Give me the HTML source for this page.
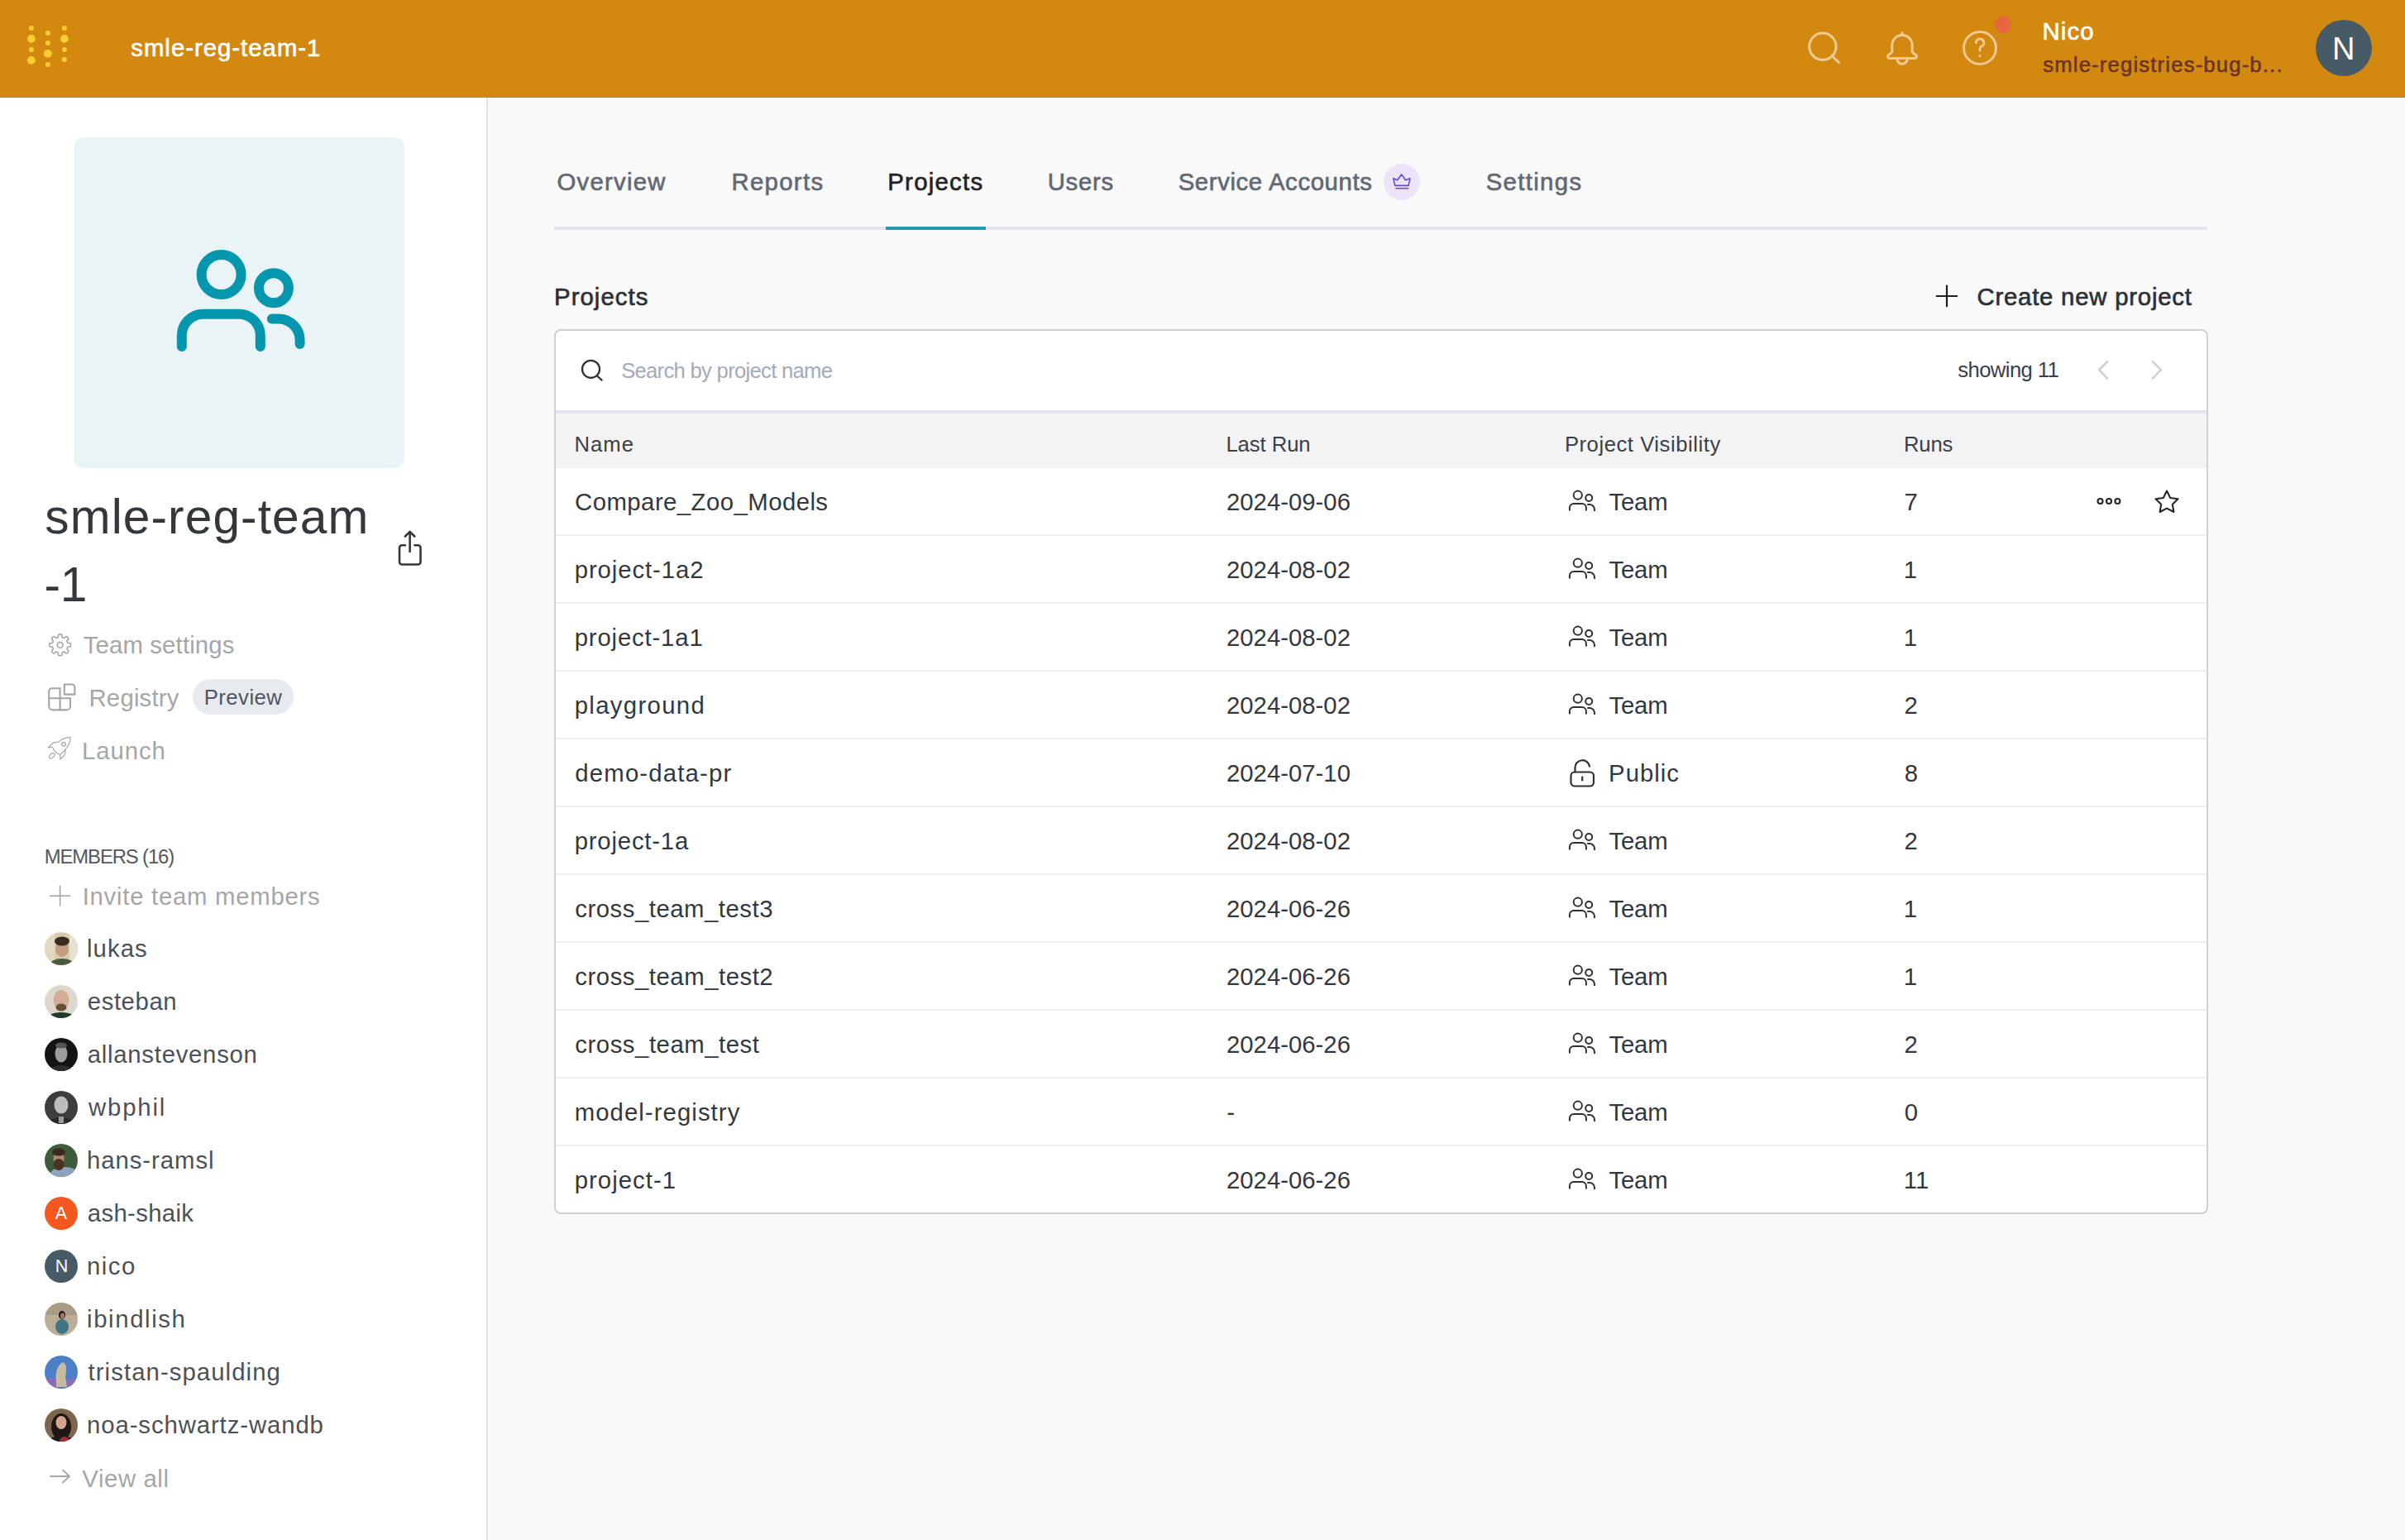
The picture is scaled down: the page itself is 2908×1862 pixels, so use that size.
<!DOCTYPE html>
<html><head><meta charset="utf-8"><title>smle-reg-team-1 Projects</title>
<style>
html,body{margin:0;padding:0;width:2908px;height:1862px;overflow:hidden;background:#f9f9f9;}
body{position:relative;font-family:"Liberation Sans",sans-serif;}
.t{position:absolute;white-space:nowrap;line-height:1;}
</style></head><body>
<div style="position:absolute;left:0px;top:0px;width:2908px;height:1862px;background:#f9f9f9;"></div>
<div style="position:absolute;left:0px;top:0px;width:588px;height:1862px;background:#ffffff;"></div>
<div style="position:absolute;left:588px;top:118px;width:2px;height:1744px;background:#e2e3e8;"></div>
<div style="position:absolute;left:0px;top:0px;width:2908px;height:118px;background:#d3880f;"></div>
<div style="position:absolute;left:0px;top:117px;width:2908px;height:1px;background:#cf7f06;"></div>
<svg style="position:absolute;left:0px;top:0px;" width="120" height="118" viewBox="0 0 120 118"><circle cx="37.9" cy="33.9" r="3" fill="#ffcc33"/><circle cx="37.9" cy="46.9" r="4.9" fill="#ffcc33"/><circle cx="37.9" cy="59.9" r="3" fill="#ffcc33"/><circle cx="37.9" cy="72.9" r="4.9" fill="#ffcc33"/><circle cx="57.9" cy="39.9" r="3" fill="#ffcc33"/><circle cx="57.9" cy="51.9" r="3" fill="#ffcc33"/><circle cx="57.9" cy="64.9" r="4.9" fill="#ffcc33"/><circle cx="57.9" cy="77.9" r="3" fill="#ffcc33"/><circle cx="77.9" cy="33.9" r="3" fill="#ffcc33"/><circle cx="77.9" cy="46.9" r="4.9" fill="#ffcc33"/><circle cx="77.9" cy="59.9" r="3" fill="#ffcc33"/><circle cx="77.9" cy="71.9" r="3" fill="#ffcc33"/></svg>
<div class="t" style="left:158.28px;top:43.44px;font-size:29.32px;letter-spacing:1.008px;color:#ffffff;-webkit-text-stroke:0.64px #ffffff;">smle-reg-team-1</div>
<svg style="position:absolute;left:2170px;top:20px;" width="270" height="80" viewBox="0 0 270 80"><g fill="none" stroke="#efca93" stroke-width="3" stroke-linecap="round" stroke-linejoin="round"><circle cx="33.9" cy="36.2" r="16.2"/><line x1="45.5" y1="48" x2="53.5" y2="55.5"/><path d="M117.8 43 V34.6 a12.2 12.2 0 0 1 24.4 0 V43 l4.3 3.6 a2.2 2.2 0 0 1 -1.4 4 H114.9 a2.2 2.2 0 0 1 -1.4 -4 z"/><path d="M123.6 50.8 a6.4 6.4 0 0 0 12.8 0"/><line x1="130" y1="19.5" x2="130" y2="21.5"/><circle cx="224" cy="38" r="19.5"/><path d="M219.3 31.8 a4.8 4.8 0 1 1 6.6 4.4 c-1.3 0.6 -1.9 1.5 -1.9 2.9 v2"/><line x1="224" y1="47.4" x2="224" y2="47.6"/></g><circle cx="252" cy="10.1" r="10.1" fill="#e8663f"/></svg>
<div class="t" style="left:2469.50px;top:22.94px;font-size:29.32px;letter-spacing:1.163px;color:#ffffff;-webkit-text-stroke:0.64px #ffffff;">Nico</div>
<div class="t" style="left:2470.29px;top:65.97px;font-size:25.65px;letter-spacing:1.177px;color:#6c3426;-webkit-text-stroke:0.56px #6c3426;">smle-registries-bug-b...</div>
<svg style="position:absolute;left:2800px;top:24px;" width="68" height="68" viewBox="0 0 68 68"><circle cx="34" cy="34" r="34" fill="#475b66"/></svg>
<div class="t" style="left:2819.88px;top:40.10px;font-size:38.00px;letter-spacing:0.000px;color:#ffffff;">N</div>
<div style="position:absolute;left:89px;top:166px;width:400px;height:400px;background:#eaf3f6;border-radius:12px;"></div>
<svg style="position:absolute;left:89px;top:166px;" width="400" height="400" viewBox="0 0 400 400"><g fill="none" stroke="#0597ad" stroke-width="12" stroke-linecap="round" stroke-linejoin="round"><circle cx="178.6" cy="166" r="24"/><circle cx="241.9" cy="182.2" r="18"/><path d="M130.8 253 V239.7 a26 26 0 0 1 26 -26 H199.8 a26 26 0 0 1 26 26 V253"/><path d="M239.8 219.4 H247.6 a26 26 0 0 1 26 26 V250"/></g></svg>
<div class="t" style="left:54.37px;top:596.18px;font-size:58.63px;letter-spacing:1.089px;color:#33383d;">smle-reg-team</div>
<div class="t" style="left:53.39px;top:678.48px;font-size:58.63px;letter-spacing:-0.066px;color:#33383d;">-1</div>
<svg style="position:absolute;left:470px;top:630px;" width="50" height="60" viewBox="0 0 50 60"><g fill="none" stroke="#34383c" stroke-width="2.6" stroke-linecap="round" stroke-linejoin="round"><path d="M25.6 37 V13"/><path d="M19.9 18.5 L25.6 12.8 L31.3 18.5"/><path d="M20 29.2 H16 a3 3 0 0 0 -3 3 V49.5 a3 3 0 0 0 3 3 H35.5 a3 3 0 0 0 3 -3 V32.2 a3 3 0 0 0 -3 -3 H31.4"/></g></svg>
<svg style="position:absolute;left:50px;top:755px;" width="50" height="175" viewBox="0 0 50 175"><g fill="none" stroke="#a6a6a6" stroke-width="1.6" stroke-linejoin="round" stroke-linecap="round"><path d="M22.67 11.90 L23.01 11.91 L23.34 11.92 L23.68 11.95 L24.01 12.01 L24.34 12.11 L24.64 12.37 L24.85 13.05 L24.93 14.19 L25.00 15.11 L25.15 15.54 L25.36 15.72 L25.58 15.83 L25.81 15.93 L26.04 16.02 L26.27 16.11 L26.50 16.20 L26.72 16.30 L26.95 16.40 L27.19 16.48 L27.46 16.50 L27.87 16.31 L28.58 15.70 L29.44 14.95 L30.06 14.62 L30.46 14.65 L30.77 14.80 L31.04 15.00 L31.30 15.22 L31.55 15.45 L31.79 15.68 L32.02 15.92 L32.25 16.17 L32.47 16.43 L32.67 16.70 L32.82 17.01 L32.85 17.41 L32.52 18.03 L31.77 18.89 L31.16 19.60 L30.97 20.01 L30.99 20.28 L31.07 20.52 L31.17 20.75 L31.27 20.97 L31.36 21.20 L31.45 21.43 L31.54 21.66 L31.64 21.89 L31.75 22.11 L31.93 22.32 L32.36 22.47 L33.28 22.54 L34.42 22.62 L35.10 22.83 L35.36 23.13 L35.46 23.46 L35.52 23.79 L35.55 24.13 L35.56 24.46 L35.57 24.80 L35.56 25.14 L35.55 25.47 L35.52 25.81 L35.46 26.14 L35.36 26.47 L35.10 26.77 L34.42 26.98 L33.28 27.06 L32.36 27.13 L31.93 27.28 L31.75 27.49 L31.64 27.71 L31.54 27.94 L31.45 28.17 L31.36 28.40 L31.27 28.63 L31.17 28.85 L31.07 29.08 L30.99 29.32 L30.97 29.59 L31.16 30.00 L31.77 30.71 L32.52 31.57 L32.85 32.19 L32.82 32.59 L32.67 32.90 L32.47 33.17 L32.25 33.43 L32.02 33.68 L31.79 33.92 L31.55 34.15 L31.30 34.38 L31.04 34.60 L30.77 34.80 L30.46 34.95 L30.06 34.98 L29.44 34.65 L28.58 33.90 L27.87 33.29 L27.46 33.10 L27.19 33.12 L26.95 33.20 L26.72 33.30 L26.50 33.40 L26.27 33.49 L26.04 33.58 L25.81 33.67 L25.58 33.77 L25.36 33.88 L25.15 34.06 L25.00 34.49 L24.93 35.41 L24.85 36.55 L24.64 37.23 L24.34 37.49 L24.01 37.59 L23.68 37.65 L23.34 37.68 L23.01 37.69 L22.67 37.70 L22.33 37.69 L22.00 37.68 L21.66 37.65 L21.33 37.59 L21.00 37.49 L20.70 37.23 L20.49 36.55 L20.41 35.41 L20.34 34.49 L20.19 34.06 L19.98 33.88 L19.76 33.77 L19.53 33.67 L19.30 33.58 L19.07 33.49 L18.84 33.40 L18.62 33.30 L18.39 33.20 L18.15 33.12 L17.88 33.10 L17.47 33.29 L16.76 33.90 L15.90 34.65 L15.28 34.98 L14.88 34.95 L14.57 34.80 L14.30 34.60 L14.04 34.38 L13.79 34.15 L13.55 33.92 L13.32 33.68 L13.09 33.43 L12.87 33.17 L12.67 32.90 L12.52 32.59 L12.49 32.19 L12.82 31.57 L13.57 30.71 L14.18 30.00 L14.37 29.59 L14.35 29.32 L14.27 29.08 L14.17 28.85 L14.07 28.63 L13.98 28.40 L13.89 28.17 L13.80 27.94 L13.70 27.71 L13.59 27.49 L13.41 27.28 L12.98 27.13 L12.06 27.06 L10.92 26.98 L10.24 26.77 L9.98 26.47 L9.88 26.14 L9.82 25.81 L9.79 25.47 L9.78 25.14 L9.77 24.80 L9.78 24.46 L9.79 24.13 L9.82 23.79 L9.88 23.46 L9.98 23.13 L10.24 22.83 L10.92 22.62 L12.06 22.54 L12.98 22.47 L13.41 22.32 L13.59 22.11 L13.70 21.89 L13.80 21.66 L13.89 21.43 L13.98 21.20 L14.07 20.97 L14.17 20.75 L14.27 20.52 L14.35 20.28 L14.37 20.01 L14.18 19.60 L13.57 18.89 L12.82 18.03 L12.49 17.41 L12.52 17.01 L12.67 16.70 L12.87 16.43 L13.09 16.17 L13.32 15.92 L13.55 15.68 L13.79 15.45 L14.04 15.22 L14.30 15.00 L14.57 14.80 L14.88 14.65 L15.28 14.62 L15.90 14.95 L16.76 15.70 L17.47 16.31 L17.88 16.50 L18.15 16.48 L18.39 16.40 L18.62 16.30 L18.84 16.20 L19.07 16.11 L19.30 16.02 L19.53 15.93 L19.76 15.83 L19.98 15.72 L20.19 15.54 L20.34 15.11 L20.41 14.19 L20.49 13.05 L20.70 12.37 L21.00 12.11 L21.33 12.01 L21.66 11.95 L22.00 11.92 L22.33 11.91Z"/><circle cx="22.67" cy="24.8" r="3.4"/></g><g fill="none" stroke="#a6a6a6" stroke-width="2.1" stroke-linejoin="round" stroke-linecap="round"><path d="M22.6 77.2 H13 a3.8 3.8 0 0 0 -3.8 3.8 V98.8 a4.6 4.6 0 0 0 4.6 4.6 H30.6 a4.4 4.4 0 0 0 4.4 -4.4 V89.3 H9.5 M22.6 77.2 V103.4"/><path d="M27.8 72.5 H36.8 a3.6 3.6 0 0 1 3.6 3.6 V84.6 H27.8 Z"/></g><g fill="none" stroke="#a6a6a6" stroke-width="1.2" stroke-linejoin="round" stroke-linecap="round"><path d="M21.3 141.8 C24.5 138.5 29 136.5 35.3 136.4 C35.3 143 33 149 22.7 157.4 C18 155.5 15.2 152.5 14.1 149.7"/><path d="M20.1 142.2 L14.1 143.2 L8.4 148.8 L13.4 148.4"/><path d="M22.7 157.4 L22.9 163 L28.5 157.4 L29.2 151.6"/><circle cx="27" cy="144.7" r="2.4"/><ellipse cx="12.9" cy="158.8" rx="3.9" ry="2.3" transform="rotate(-45 12.9 158.8)"/></g></svg>
<div class="t" style="left:100.64px;top:765.14px;font-size:29.32px;letter-spacing:0.167px;color:#a6a6a6;">Team settings</div>
<div class="t" style="left:107.50px;top:829.44px;font-size:29.32px;letter-spacing:0.206px;color:#a6a6a6;">Registry</div>
<div style="position:absolute;left:233px;top:821px;width:122px;height:43px;background:#e7eaee;border-radius:22px;"></div>
<div class="t" style="left:246.70px;top:831.47px;font-size:25.65px;letter-spacing:0.501px;color:#4e5563;">Preview</div>
<div class="t" style="left:98.90px;top:893.14px;font-size:29.32px;letter-spacing:0.966px;color:#a6a6a6;">Launch</div>
<div class="t" style="left:53.85px;top:1023.89px;font-size:23.82px;letter-spacing:-1.098px;color:#53585e;">MEMBERS (16)</div>
<svg style="position:absolute;left:55px;top:1065px;" width="35" height="35" viewBox="0 0 35 35"><g stroke="#a6a6a6" stroke-width="1.6" stroke-linecap="butt"><line x1="5" y1="18.2" x2="30.1" y2="18.2"/><line x1="17.6" y1="5.6" x2="17.6" y2="30.6"/></g></svg>
<div class="t" style="left:99.69px;top:1069.14px;font-size:29.32px;letter-spacing:0.742px;color:#a6a6a6;">Invite team members</div>
<svg style="position:absolute;left:54px;top:1127px;" width="40" height="40" viewBox="0 0 40 40"><defs><clipPath id="av0"><circle cx="20" cy="20" r="20"/></clipPath></defs><g clip-path="url(#av0)"><rect width="40" height="40" fill="#d6cbb0"/><rect x="0" y="0" width="12" height="40" fill="#e3d9c3"/><rect x="30" y="0" width="10" height="40" fill="#e8e0d0"/><ellipse cx="21" cy="20" rx="8" ry="10" fill="#c59c80"/><ellipse cx="21" cy="11" rx="9" ry="5.5" fill="#3a2b22"/><ellipse cx="21" cy="40" rx="15" ry="8" fill="#4a5a3a"/></g></svg>
<div class="t" style="left:105.02px;top:1132.14px;font-size:29.32px;letter-spacing:1.049px;color:#4c5157;">lukas</div>
<svg style="position:absolute;left:54px;top:1191px;" width="40" height="40" viewBox="0 0 40 40"><defs><clipPath id="av1"><circle cx="20" cy="20" r="20"/></clipPath></defs><g clip-path="url(#av1)"><rect width="40" height="40" fill="#dcd8ce"/><ellipse cx="20" cy="18" rx="9.5" ry="12" fill="#d3ae94"/><ellipse cx="20" cy="27" rx="6.5" ry="4.5" fill="#6e4c36"/><ellipse cx="20" cy="43" rx="20" ry="10" fill="#1f3d29"/></g></svg>
<div class="t" style="left:105.75px;top:1196.14px;font-size:29.32px;letter-spacing:0.587px;color:#4c5157;">esteban</div>
<svg style="position:absolute;left:54px;top:1255px;" width="40" height="40" viewBox="0 0 40 40"><defs><clipPath id="av2"><circle cx="20" cy="20" r="20"/></clipPath></defs><g clip-path="url(#av2)"><rect width="40" height="40" fill="#141414"/><ellipse cx="20" cy="19" rx="7.5" ry="10.5" fill="#9c9c9c"/><ellipse cx="20" cy="9" rx="7" ry="3.5" fill="#555"/><ellipse cx="20" cy="42" rx="16" ry="9" fill="#2c2c2c"/></g></svg>
<div class="t" style="left:105.75px;top:1260.14px;font-size:29.32px;letter-spacing:0.736px;color:#4c5157;">allanstevenson</div>
<svg style="position:absolute;left:54px;top:1319px;" width="40" height="40" viewBox="0 0 40 40"><defs><clipPath id="av3"><circle cx="20" cy="20" r="20"/></clipPath></defs><g clip-path="url(#av3)"><rect width="40" height="40" fill="#3d3d3d"/><ellipse cx="20" cy="17" rx="8.5" ry="10.5" fill="#bdbdbd"/><ellipse cx="20" cy="41" rx="17" ry="9" fill="#2b2b2b"/><rect x="17" y="31" width="6" height="8" fill="#9a9a9a"/></g></svg>
<div class="t" style="left:107.04px;top:1324.14px;font-size:29.32px;letter-spacing:1.842px;color:#4c5157;">wbphil</div>
<svg style="position:absolute;left:54px;top:1383px;" width="40" height="40" viewBox="0 0 40 40"><defs><clipPath id="av4"><circle cx="20" cy="20" r="20"/></clipPath></defs><g clip-path="url(#av4)"><rect width="40" height="40" fill="#3f5c3a"/><ellipse cx="24" cy="38" rx="18" ry="10" fill="#8ea3bf"/><ellipse cx="17" cy="18" rx="6.5" ry="8" fill="#b08a70"/><ellipse cx="17" cy="10" rx="8" ry="4.5" fill="#3a2a1e"/><ellipse cx="17" cy="25" rx="6.5" ry="7" fill="#4a3222"/></g></svg>
<div class="t" style="left:104.97px;top:1388.14px;font-size:29.32px;letter-spacing:0.956px;color:#4c5157;">hans-ramsl</div>
<svg style="position:absolute;left:54px;top:1447px;" width="40" height="40" viewBox="0 0 40 40"><defs><clipPath id="av5"><circle cx="20" cy="20" r="20"/></clipPath></defs><g clip-path="url(#av5)"><rect width="40" height="40" fill="#f4581f"/></g></svg>
<div class="t" style="left:105.75px;top:1452.14px;font-size:29.32px;letter-spacing:0.342px;color:#4c5157;">ash-shaik</div>
<svg style="position:absolute;left:54px;top:1511px;" width="40" height="40" viewBox="0 0 40 40"><defs><clipPath id="av6"><circle cx="20" cy="20" r="20"/></clipPath></defs><g clip-path="url(#av6)"><rect width="40" height="40" fill="#475b66"/></g></svg>
<div class="t" style="left:105.05px;top:1516.14px;font-size:29.32px;letter-spacing:1.466px;color:#4c5157;">nico</div>
<svg style="position:absolute;left:54px;top:1575px;" width="40" height="40" viewBox="0 0 40 40"><defs><clipPath id="av7"><circle cx="20" cy="20" r="20"/></clipPath></defs><g clip-path="url(#av7)"><rect width="40" height="40" fill="#bcae95"/><rect x="0" y="0" width="40" height="15" fill="#a99c86"/><ellipse cx="21" cy="29" rx="8" ry="9" fill="#3d7582"/><ellipse cx="21" cy="15" rx="4" ry="5" fill="#1e1a1a"/><ellipse cx="21.5" cy="16" rx="2.5" ry="3.5" fill="#a07a66"/></g></svg>
<div class="t" style="left:105.04px;top:1580.14px;font-size:29.32px;letter-spacing:1.617px;color:#4c5157;">ibindlish</div>
<svg style="position:absolute;left:54px;top:1639px;" width="40" height="40" viewBox="0 0 40 40"><defs><clipPath id="av8"><circle cx="20" cy="20" r="20"/></clipPath></defs><g clip-path="url(#av8)"><rect width="40" height="40" fill="#4b80c9"/><ellipse cx="8" cy="33" rx="9" ry="6" fill="#8c6cb8"/><ellipse cx="33" cy="34" rx="8" ry="6" fill="#8c6cb8"/><path d="M14 38 L14 30 C12 22 16 10 22 8 C27 10 27 18 25 26 L27 38 Z" fill="#c8b9a3"/></g></svg>
<div class="t" style="left:106.56px;top:1644.14px;font-size:29.32px;letter-spacing:1.077px;color:#4c5157;">tristan-spaulding</div>
<svg style="position:absolute;left:54px;top:1703px;" width="40" height="40" viewBox="0 0 40 40"><defs><clipPath id="av9"><circle cx="20" cy="20" r="20"/></clipPath></defs><g clip-path="url(#av9)"><rect width="40" height="40" fill="#7d6650"/><ellipse cx="20" cy="22" rx="12" ry="16" fill="#1e1612"/><ellipse cx="20" cy="17" rx="6.5" ry="8" fill="#d3a38b"/><ellipse cx="20" cy="42" rx="18" ry="9" fill="#1a1a1a"/><ellipse cx="24" cy="40" rx="6" ry="6" fill="#a83030"/></g></svg>
<div class="t" style="left:105.05px;top:1708.14px;font-size:29.32px;letter-spacing:0.905px;color:#4c5157;">noa-schwartz-wandb</div>
<div class="t" style="left:54px;top:1457.25px;width:40px;text-align:center;font-size:21.5px;color:#fff">A</div>
<div class="t" style="left:54.5px;top:1521.25px;width:40px;text-align:center;font-size:21.5px;color:#fff">N</div>
<svg style="position:absolute;left:55px;top:1770px;" width="35" height="30" viewBox="0 0 35 30"><g fill="none" stroke="#a6a6a6" stroke-width="1.8" stroke-linecap="round" stroke-linejoin="round"><path d="M6 15 H29 M21 7.5 L29 15 L21 22.5"/></g></svg>
<div class="t" style="left:99.37px;top:1773.14px;font-size:29.32px;letter-spacing:0.582px;color:#a6a6a6;">View all</div>
<div class="t" style="left:673.41px;top:205.14px;font-size:29.32px;letter-spacing:1.277px;color:#626873;-webkit-text-stroke:0.64px #626873;">Overview</div>
<div class="t" style="left:884.40px;top:205.14px;font-size:29.32px;letter-spacing:1.336px;color:#626873;-webkit-text-stroke:0.64px #626873;">Reports</div>
<div class="t" style="left:1073.30px;top:205.14px;font-size:29.32px;letter-spacing:1.266px;color:#1f2328;-webkit-text-stroke:0.64px #1f2328;">Projects</div>
<div class="t" style="left:1266.74px;top:205.14px;font-size:29.32px;letter-spacing:0.692px;color:#626873;-webkit-text-stroke:0.64px #626873;">Users</div>
<div class="t" style="left:1424.67px;top:205.14px;font-size:29.32px;letter-spacing:0.627px;color:#626873;-webkit-text-stroke:0.64px #626873;">Service Accounts</div>
<svg style="position:absolute;left:1673px;top:198px;" width="44" height="44" viewBox="0 0 44 44"><circle cx="22" cy="22" r="22" fill="#ebe4fc"/><g fill="none" stroke="#6b47d0" stroke-width="1.6" stroke-linejoin="round" stroke-linecap="round"><path d="M11.8 17.8 L16.6 19.7 L21.7 12.9 L26.5 19.7 L31.9 17.8 L30.1 26.4 H13.7 Z"/><line x1="14.9" y1="29.8" x2="29.7" y2="29.8"/></g></svg>
<div class="t" style="left:1796.67px;top:205.14px;font-size:29.32px;letter-spacing:1.352px;color:#626873;-webkit-text-stroke:0.64px #626873;">Settings</div>
<div style="position:absolute;left:670px;top:274px;width:1999px;height:4px;background:#e4e5ea;"></div>
<div style="position:absolute;left:1071px;top:274px;width:121px;height:4px;background:#1f9bb0;"></div>
<div class="t" style="left:670.10px;top:343.74px;font-size:29.32px;letter-spacing:1.052px;color:#2b3036;-webkit-text-stroke:0.64px #2b3036;">Projects</div>
<svg style="position:absolute;left:2330px;top:330px;" width="50" height="50" viewBox="0 0 50 50"><g stroke="#1c2028" stroke-width="2.2" stroke-linecap="round"><line x1="11.7" y1="28" x2="36.2" y2="28"/><line x1="24" y1="15.6" x2="24" y2="40.3"/></g></svg>
<div class="t" style="left:2390.51px;top:344.14px;font-size:29.32px;letter-spacing:0.785px;color:#2b3036;-webkit-text-stroke:0.64px #2b3036;">Create new project</div>
<div style="position:absolute;left:670px;top:398px;width:2000px;height:1070px;background:#ffffff;box-sizing:border-box;border:2px solid #d0d0d0;border-radius:8px;"></div>
<svg style="position:absolute;left:690px;top:425px;" width="50" height="45" viewBox="0 0 50 45"><g fill="none" stroke="#2d3136" stroke-width="2.2" stroke-linecap="round"><circle cx="24.5" cy="21.3" r="10.5"/><line x1="32" y1="29.5" x2="37.6" y2="34.6"/></g></svg>
<div class="t" style="left:751.14px;top:435.87px;font-size:25.65px;letter-spacing:-0.710px;color:#a2abb8;">Search by project name</div>
<div class="t" style="left:2367.29px;top:435.47px;font-size:25.65px;letter-spacing:-0.590px;color:#3b4046;">showing 11</div>
<svg style="position:absolute;left:2520px;top:420px;" width="110" height="60" viewBox="0 0 110 60"><g fill="none" stroke="#d0d0d0" stroke-width="2.6" stroke-linecap="round" stroke-linejoin="round"><path d="M28.1 17.2 L18.1 27.2 L28.1 37.5"/><path d="M82.8 17.2 L92.9 27.2 L82.8 37.5"/></g></svg>
<div style="position:absolute;left:672px;top:496px;width:1996px;height:4px;background:#e4e5ea;"></div>
<div style="position:absolute;left:672px;top:500px;width:1996px;height:66px;background:#f3f3f3;"></div>
<div class="t" style="left:694.50px;top:524.97px;font-size:25.65px;letter-spacing:1.006px;color:#3b4046;">Name</div>
<div class="t" style="left:1482.40px;top:524.97px;font-size:25.65px;letter-spacing:-0.057px;color:#3b4046;">Last Run</div>
<div class="t" style="left:1891.90px;top:524.97px;font-size:25.65px;letter-spacing:0.544px;color:#3b4046;">Project Visibility</div>
<div class="t" style="left:2301.90px;top:524.97px;font-size:25.65px;letter-spacing:-0.117px;color:#3b4046;">Runs</div>
<div class="t" style="left:695.11px;top:592.14px;font-size:29.32px;letter-spacing:0.456px;color:#33383d;">Compare_Zoo_Models</div>
<div class="t" style="left:1483.03px;top:592.14px;font-size:29.32px;letter-spacing:0.000px;color:#33383d;letter-spacing:0.000px">2024-09-06</div>
<svg style="position:absolute;left:1890px;top:586px;" width="45" height="35" viewBox="0 0 45 35"><g fill="none" stroke="#2d3136" stroke-width="2" stroke-linecap="round" stroke-linejoin="round"><circle cx="17.8" cy="12.7" r="5.1"/><circle cx="31.2" cy="16" r="4"/><path d="M7.9 30.8 V27.9 a5 5 0 0 1 5 -5 H22.9 a5 5 0 0 1 5 5 V30.8"/><path d="M30 24 H32 a6 6 0 0 1 6 6 V31.3"/></g></svg>
<div class="t" style="left:1945.44px;top:592.14px;font-size:29.32px;letter-spacing:-0.149px;color:#33383d;">Team</div>
<div class="t" style="left:2302.50px;top:592.14px;font-size:29.32px;letter-spacing:0.000px;color:#33383d;">7</div>
<div style="position:absolute;left:672px;top:646px;width:1996px;height:2px;background:#efefef;"></div>
<div class="t" style="left:694.71px;top:674.14px;font-size:29.32px;letter-spacing:0.910px;color:#33383d;">project-1a2</div>
<div class="t" style="left:1483.03px;top:674.14px;font-size:29.32px;letter-spacing:0.000px;color:#33383d;letter-spacing:0.000px">2024-08-02</div>
<svg style="position:absolute;left:1890px;top:668px;" width="45" height="35" viewBox="0 0 45 35"><g fill="none" stroke="#2d3136" stroke-width="2" stroke-linecap="round" stroke-linejoin="round"><circle cx="17.8" cy="12.7" r="5.1"/><circle cx="31.2" cy="16" r="4"/><path d="M7.9 30.8 V27.9 a5 5 0 0 1 5 -5 H22.9 a5 5 0 0 1 5 5 V30.8"/><path d="M30 24 H32 a6 6 0 0 1 6 6 V31.3"/></g></svg>
<div class="t" style="left:1945.44px;top:674.14px;font-size:29.32px;letter-spacing:-0.149px;color:#33383d;">Team</div>
<div class="t" style="left:2301.77px;top:674.14px;font-size:29.32px;letter-spacing:0.000px;color:#33383d;">1</div>
<div style="position:absolute;left:672px;top:728px;width:1996px;height:2px;background:#efefef;"></div>
<div class="t" style="left:694.71px;top:756.14px;font-size:29.32px;letter-spacing:0.835px;color:#33383d;">project-1a1</div>
<div class="t" style="left:1483.03px;top:756.14px;font-size:29.32px;letter-spacing:0.000px;color:#33383d;letter-spacing:0.000px">2024-08-02</div>
<svg style="position:absolute;left:1890px;top:750px;" width="45" height="35" viewBox="0 0 45 35"><g fill="none" stroke="#2d3136" stroke-width="2" stroke-linecap="round" stroke-linejoin="round"><circle cx="17.8" cy="12.7" r="5.1"/><circle cx="31.2" cy="16" r="4"/><path d="M7.9 30.8 V27.9 a5 5 0 0 1 5 -5 H22.9 a5 5 0 0 1 5 5 V30.8"/><path d="M30 24 H32 a6 6 0 0 1 6 6 V31.3"/></g></svg>
<div class="t" style="left:1945.44px;top:756.14px;font-size:29.32px;letter-spacing:-0.149px;color:#33383d;">Team</div>
<div class="t" style="left:2301.77px;top:756.14px;font-size:29.32px;letter-spacing:0.000px;color:#33383d;">1</div>
<div style="position:absolute;left:672px;top:810px;width:1996px;height:2px;background:#efefef;"></div>
<div class="t" style="left:694.71px;top:838.14px;font-size:29.32px;letter-spacing:1.335px;color:#33383d;">playground</div>
<div class="t" style="left:1483.03px;top:838.14px;font-size:29.32px;letter-spacing:0.000px;color:#33383d;letter-spacing:0.000px">2024-08-02</div>
<svg style="position:absolute;left:1890px;top:832px;" width="45" height="35" viewBox="0 0 45 35"><g fill="none" stroke="#2d3136" stroke-width="2" stroke-linecap="round" stroke-linejoin="round"><circle cx="17.8" cy="12.7" r="5.1"/><circle cx="31.2" cy="16" r="4"/><path d="M7.9 30.8 V27.9 a5 5 0 0 1 5 -5 H22.9 a5 5 0 0 1 5 5 V30.8"/><path d="M30 24 H32 a6 6 0 0 1 6 6 V31.3"/></g></svg>
<div class="t" style="left:1945.44px;top:838.14px;font-size:29.32px;letter-spacing:-0.149px;color:#33383d;">Team</div>
<div class="t" style="left:2302.53px;top:838.14px;font-size:29.32px;letter-spacing:0.000px;color:#33383d;">2</div>
<div style="position:absolute;left:672px;top:892px;width:1996px;height:2px;background:#efefef;"></div>
<div class="t" style="left:695.37px;top:920.14px;font-size:29.32px;letter-spacing:1.167px;color:#33383d;">demo-data-pr</div>
<div class="t" style="left:1483.03px;top:920.14px;font-size:29.32px;letter-spacing:0.000px;color:#33383d;letter-spacing:0.000px">2024-07-10</div>
<svg style="position:absolute;left:1890px;top:916.5px;" width="45" height="40" viewBox="0 0 45 40"><g fill="none" stroke="#2d3136" stroke-width="2.2" stroke-linecap="round" stroke-linejoin="round"><rect x="9.5" y="16.5" width="27.5" height="17" rx="4.5"/><path d="M14.5 16.5 V11 a8.8 8.8 0 0 1 17.5 -1.3"/><line x1="23.2" y1="22.5" x2="23.2" y2="26.5"/></g></svg>
<div class="t" style="left:1945.10px;top:920.14px;font-size:29.32px;letter-spacing:1.006px;color:#33383d;">Public</div>
<div class="t" style="left:2302.73px;top:920.14px;font-size:29.32px;letter-spacing:0.000px;color:#33383d;">8</div>
<div style="position:absolute;left:672px;top:974px;width:1996px;height:2px;background:#efefef;"></div>
<div class="t" style="left:694.71px;top:1002.14px;font-size:29.32px;letter-spacing:0.803px;color:#33383d;">project-1a</div>
<div class="t" style="left:1483.03px;top:1002.14px;font-size:29.32px;letter-spacing:0.000px;color:#33383d;letter-spacing:0.000px">2024-08-02</div>
<svg style="position:absolute;left:1890px;top:996px;" width="45" height="35" viewBox="0 0 45 35"><g fill="none" stroke="#2d3136" stroke-width="2" stroke-linecap="round" stroke-linejoin="round"><circle cx="17.8" cy="12.7" r="5.1"/><circle cx="31.2" cy="16" r="4"/><path d="M7.9 30.8 V27.9 a5 5 0 0 1 5 -5 H22.9 a5 5 0 0 1 5 5 V30.8"/><path d="M30 24 H32 a6 6 0 0 1 6 6 V31.3"/></g></svg>
<div class="t" style="left:1945.44px;top:1002.14px;font-size:29.32px;letter-spacing:-0.149px;color:#33383d;">Team</div>
<div class="t" style="left:2302.53px;top:1002.14px;font-size:29.32px;letter-spacing:0.000px;color:#33383d;">2</div>
<div style="position:absolute;left:672px;top:1056px;width:1996px;height:2px;background:#efefef;"></div>
<div class="t" style="left:695.35px;top:1084.14px;font-size:29.32px;letter-spacing:0.517px;color:#33383d;">cross_team_test3</div>
<div class="t" style="left:1483.03px;top:1084.14px;font-size:29.32px;letter-spacing:0.000px;color:#33383d;letter-spacing:0.000px">2024-06-26</div>
<svg style="position:absolute;left:1890px;top:1078px;" width="45" height="35" viewBox="0 0 45 35"><g fill="none" stroke="#2d3136" stroke-width="2" stroke-linecap="round" stroke-linejoin="round"><circle cx="17.8" cy="12.7" r="5.1"/><circle cx="31.2" cy="16" r="4"/><path d="M7.9 30.8 V27.9 a5 5 0 0 1 5 -5 H22.9 a5 5 0 0 1 5 5 V30.8"/><path d="M30 24 H32 a6 6 0 0 1 6 6 V31.3"/></g></svg>
<div class="t" style="left:1945.44px;top:1084.14px;font-size:29.32px;letter-spacing:-0.149px;color:#33383d;">Team</div>
<div class="t" style="left:2301.77px;top:1084.14px;font-size:29.32px;letter-spacing:0.000px;color:#33383d;">1</div>
<div style="position:absolute;left:672px;top:1138px;width:1996px;height:2px;background:#efefef;"></div>
<div class="t" style="left:695.35px;top:1166.14px;font-size:29.32px;letter-spacing:0.529px;color:#33383d;">cross_team_test2</div>
<div class="t" style="left:1483.03px;top:1166.14px;font-size:29.32px;letter-spacing:0.000px;color:#33383d;letter-spacing:0.000px">2024-06-26</div>
<svg style="position:absolute;left:1890px;top:1160px;" width="45" height="35" viewBox="0 0 45 35"><g fill="none" stroke="#2d3136" stroke-width="2" stroke-linecap="round" stroke-linejoin="round"><circle cx="17.8" cy="12.7" r="5.1"/><circle cx="31.2" cy="16" r="4"/><path d="M7.9 30.8 V27.9 a5 5 0 0 1 5 -5 H22.9 a5 5 0 0 1 5 5 V30.8"/><path d="M30 24 H32 a6 6 0 0 1 6 6 V31.3"/></g></svg>
<div class="t" style="left:1945.44px;top:1166.14px;font-size:29.32px;letter-spacing:-0.149px;color:#33383d;">Team</div>
<div class="t" style="left:2301.77px;top:1166.14px;font-size:29.32px;letter-spacing:0.000px;color:#33383d;">1</div>
<div style="position:absolute;left:672px;top:1220px;width:1996px;height:2px;background:#efefef;"></div>
<div class="t" style="left:695.35px;top:1248.14px;font-size:29.32px;letter-spacing:0.535px;color:#33383d;">cross_team_test</div>
<div class="t" style="left:1483.03px;top:1248.14px;font-size:29.32px;letter-spacing:0.000px;color:#33383d;letter-spacing:0.000px">2024-06-26</div>
<svg style="position:absolute;left:1890px;top:1242px;" width="45" height="35" viewBox="0 0 45 35"><g fill="none" stroke="#2d3136" stroke-width="2" stroke-linecap="round" stroke-linejoin="round"><circle cx="17.8" cy="12.7" r="5.1"/><circle cx="31.2" cy="16" r="4"/><path d="M7.9 30.8 V27.9 a5 5 0 0 1 5 -5 H22.9 a5 5 0 0 1 5 5 V30.8"/><path d="M30 24 H32 a6 6 0 0 1 6 6 V31.3"/></g></svg>
<div class="t" style="left:1945.44px;top:1248.14px;font-size:29.32px;letter-spacing:-0.149px;color:#33383d;">Team</div>
<div class="t" style="left:2302.53px;top:1248.14px;font-size:29.32px;letter-spacing:0.000px;color:#33383d;">2</div>
<div style="position:absolute;left:672px;top:1302px;width:1996px;height:2px;background:#efefef;"></div>
<div class="t" style="left:694.65px;top:1330.14px;font-size:29.32px;letter-spacing:1.076px;color:#33383d;">model-registry</div>
<div class="t" style="left:1483.20px;top:1330.14px;font-size:29.32px;letter-spacing:0.000px;color:#33383d;letter-spacing:0.000px">-</div>
<svg style="position:absolute;left:1890px;top:1324px;" width="45" height="35" viewBox="0 0 45 35"><g fill="none" stroke="#2d3136" stroke-width="2" stroke-linecap="round" stroke-linejoin="round"><circle cx="17.8" cy="12.7" r="5.1"/><circle cx="31.2" cy="16" r="4"/><path d="M7.9 30.8 V27.9 a5 5 0 0 1 5 -5 H22.9 a5 5 0 0 1 5 5 V30.8"/><path d="M30 24 H32 a6 6 0 0 1 6 6 V31.3"/></g></svg>
<div class="t" style="left:1945.44px;top:1330.14px;font-size:29.32px;letter-spacing:-0.149px;color:#33383d;">Team</div>
<div class="t" style="left:2302.85px;top:1330.14px;font-size:29.32px;letter-spacing:0.000px;color:#33383d;">0</div>
<div style="position:absolute;left:672px;top:1384px;width:1996px;height:2px;background:#efefef;"></div>
<div class="t" style="left:694.71px;top:1412.14px;font-size:29.32px;letter-spacing:1.033px;color:#33383d;">project-1</div>
<div class="t" style="left:1483.03px;top:1412.14px;font-size:29.32px;letter-spacing:0.000px;color:#33383d;letter-spacing:0.000px">2024-06-26</div>
<svg style="position:absolute;left:1890px;top:1406px;" width="45" height="35" viewBox="0 0 45 35"><g fill="none" stroke="#2d3136" stroke-width="2" stroke-linecap="round" stroke-linejoin="round"><circle cx="17.8" cy="12.7" r="5.1"/><circle cx="31.2" cy="16" r="4"/><path d="M7.9 30.8 V27.9 a5 5 0 0 1 5 -5 H22.9 a5 5 0 0 1 5 5 V30.8"/><path d="M30 24 H32 a6 6 0 0 1 6 6 V31.3"/></g></svg>
<div class="t" style="left:1945.44px;top:1412.14px;font-size:29.32px;letter-spacing:-0.149px;color:#33383d;">Team</div>
<div class="t" style="left:2301.77px;top:1412.14px;font-size:29.32px;letter-spacing:0.000px;color:#33383d;">11</div>
<svg style="position:absolute;left:2520px;top:580px;" width="130" height="50" viewBox="0 0 130 50"><g fill="none" stroke="#22262b" stroke-width="2.1" stroke-linecap="round" stroke-linejoin="round"><circle cx="19.5" cy="26" r="3"/><circle cx="30" cy="26" r="3"/><circle cx="40.4" cy="26" r="3"/><path d="M100 13.5 L104.2 22 L113.5 23.3 L106.8 29.8 L108.4 39 L100 34.6 L91.6 39 L93.2 29.8 L86.5 23.3 L95.8 22 Z"/></g></svg>
</body></html>
